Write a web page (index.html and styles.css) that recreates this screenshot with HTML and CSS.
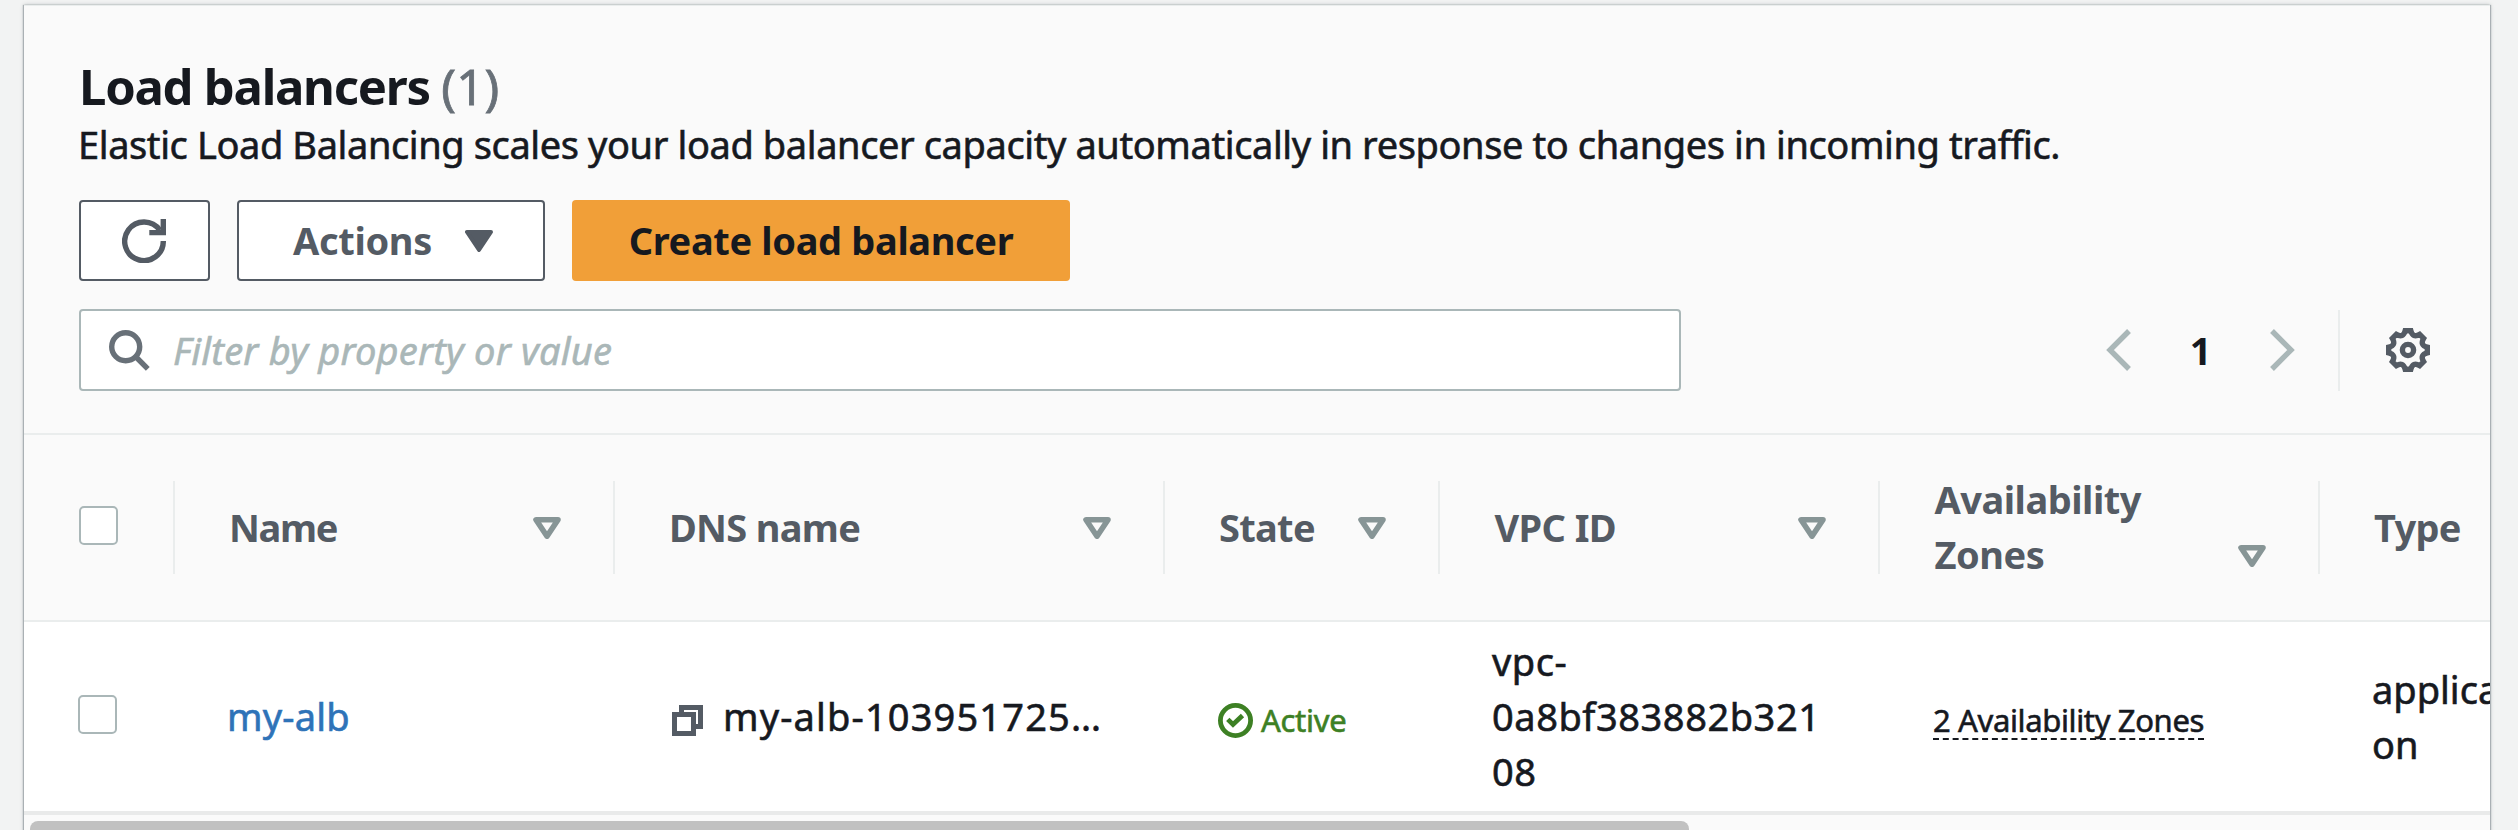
FILE: index.html
```html
<!DOCTYPE html>
<html lang="en">
<head>
<meta charset="utf-8">
<title>Load balancers</title>
<link rel="stylesheet" href="styles.css">
</head>
<body>
<svg class="defs" aria-hidden="true">
  <symbol id="sort" viewBox="0 0 28 22"><path d="M3 2.8H25L14 19.2Z" fill="none" stroke="currentColor" stroke-width="5.6" stroke-linejoin="round"/></symbol>
</svg>
<main class="panel">
  <header class="panel-header">
    <h1 class="title">Load balancers <span class="count">(1)</span></h1>
    <p class="description">Elastic Load Balancing scales your load balancer capacity automatically in response to changes in incoming traffic.</p>
    <div class="actions">
      <button class="button button-icon" aria-label="Refresh">
        <svg width="44" height="44" viewBox="0 0 44 44" fill="none" stroke="currentColor" stroke-width="5.4"><path d="M41.3 22A19.3 19.3 0 1 1 37.8 11.2"/><path d="M41.3 0V13.6H27.3"/></svg>
      </button>
      <button class="button button-menu"><span>Actions</span>
        <svg width="28" height="22" viewBox="0 0 28 22"><path d="M2 2H26L14 20Z" fill="currentColor" stroke="currentColor" stroke-width="4" stroke-linejoin="round"/></svg>
      </button>
      <button class="button button-primary">Create load balancer</button>
    </div>
    <div class="tools">
      <div class="filter">
        <svg width="41" height="41" viewBox="0 0 41 41" fill="none" stroke="currentColor" stroke-width="5.4"><circle cx="16.7" cy="16.7" r="14"/><path d="M26.5 26.5L38.8 38.8"/></svg>
        <span class="placeholder">Filter by property or value</span>
      </div>
      <nav class="pager">
        <svg width="25" height="42" viewBox="0 0 25 42" fill="none" stroke="currentColor" stroke-width="5.4"><path d="M23 2L4 21L23 40"/></svg>
        <span class="page">1</span>
        <svg width="25" height="42" viewBox="0 0 25 42" fill="none" stroke="currentColor" stroke-width="5.4"><path d="M2 2L21 21L2 40"/></svg>
      </nav>
      <div class="settings">
        <svg width="44" height="44" viewBox="-22 -22 44 44" fill="none" stroke="currentColor" stroke-width="5.4"><path d="M-2.8 -19.3L2.8 -19.3Q4.8 -11.5 11.67 -15.63L15.63 -11.67Q11.5 -4.8 19.3 -2.8L19.3 2.8Q11.5 4.8 15.63 11.67L11.67 15.63Q4.8 11.5 2.8 19.3L-2.8 19.3Q-4.8 11.5 -11.67 15.63L-15.63 11.67Q-11.5 4.8 -19.3 2.8L-19.3 -2.8Q-11.5 -4.8 -15.63 -11.67L-11.67 -15.63Q-4.8 -11.5 -2.8 -19.3Z"/><circle r="5.6"/></svg>
      </div>
    </div>
  </header>

  <section class="table">
    <div class="row head">
      <div class="cell select"><span class="checkbox"></span></div>
      <div class="cell"><span class="t-name">Name</span><svg class="sort"><use href="#sort"/></svg></div>
      <div class="cell"><span class="t-dns">DNS name</span><svg class="sort"><use href="#sort"/></svg></div>
      <div class="cell state"><span class="t-state">State</span><svg class="sort"><use href="#sort"/></svg></div>
      <div class="cell wide"><span class="t-vpc">VPC ID</span><svg class="sort"><use href="#sort"/></svg></div>
      <div class="cell wide zones"><span class="t-zones">Availability Zones</span><svg class="sort"><use href="#sort"/></svg></div>
      <div class="cell state"><span class="t-type">Type</span></div>
    </div>
    <div class="row body">
      <div class="cell select"><span class="checkbox"></span></div>
      <div class="cell"><a class="link">my-alb</a></div>
      <div class="cell dns">
        <svg width="31" height="31" viewBox="0 0 31 31" fill="none" stroke="currentColor" stroke-width="5"><path d="M9.5 7V2.5H28.5V21.5H24"/><path d="M2.5 9.5H21.5V28.5H2.5Z"/></svg>
        <span>my-alb-103951725…</span>
      </div>
      <div class="cell status">
        <svg width="35" height="35" viewBox="0 0 35 35" fill="none" stroke="currentColor" stroke-width="4.8"><circle cx="17.5" cy="17.5" r="15.1"/><path d="M9.8 16.4L15 21.5L24.5 12.6"/></svg>
        <span>Active</span>
      </div>
      <div class="cell vpc">vpc-<br>0a8bf383882b321<br>08</div>
      <div class="cell az"><span>2 Availability Zones</span></div>
      <div class="cell type">applicati<br>on</div>
    </div>
  </section>
  <div class="scroll-track"><div class="scroll-thumb"></div></div>
</main>
</body>
</html>
```
FILE: styles.css
```css
* { box-sizing: border-box; }
body {
  margin: 0;
  height: 830px;
  overflow: hidden;
  padding: 5px 28px 0 24px;
  background: #f2f3f3;
  color: #16191f;
  font: 38px/55px "Noto Sans", sans-serif;
}
svg { display: block; flex: none; }
.defs { position: absolute; width: 0; height: 0; }

.panel {
  width: 2466px;
  height: 840px;
  overflow: hidden;
  background: #fafafa;
  border-top: 1px solid #eaeded;
  box-shadow: -1px 0 1px #aab0b4, 1px 0 1px #aab0b4, 0 0 4px rgba(0, 28, 36, 0.25);
}
.panel-header {
  height: 429px;
  padding: 46px 60px 0 55px;
  border-bottom: 2px solid #eaeded;
}
.title {
  margin: 0;
  font-size: 49px;
  line-height: 68px;
  letter-spacing: -1.25px;
}
.count {
  color: #687078;
  font-weight: 400;
  letter-spacing: 0.3px;
  -webkit-text-stroke: 0.8px currentColor;
}
.description {
  margin: -3px 0 0 -1px;
  letter-spacing: -0.4px;
  white-space: nowrap;
}
.description,
.placeholder,
.body { -webkit-text-stroke: 0.6px currentColor; }

.actions { display: flex; gap: 27px; margin-top: 28px; }
.button {
  display: flex;
  align-items: center;
  justify-content: center;
  height: 81px;
  padding: 0;
  border: 2px solid #545b64;
  border-radius: 4px;
  background: #fff;
  color: #545b64;
  font: 700 38px/55px "Noto Sans", sans-serif;
  letter-spacing: -0.35px;
}
.button-icon { width: 131px; padding-right: 2px; }
.button-menu { width: 308px; gap: 33px; padding-left: 4px; }
.button-primary {
  width: 498px;
  border: 0;
  background: #f19f38;
  color: #16191f;
}

.tools { display: flex; align-items: center; margin-top: 28px; }
.filter {
  display: flex;
  align-items: center;
  gap: 23px;
  width: 1602px;
  height: 82px;
  padding-left: 28px;
  border: 2px solid #aab7b8;
  border-radius: 4px;
  background: #fff;
  color: #687078;
}
.placeholder { color: #aab7b8; font-style: italic; letter-spacing: 0.2px; }
.pager {
  display: flex;
  align-items: center;
  justify-content: space-between;
  width: 189px;
  margin-left: auto;
  color: #aab7b8;
}
.page { color: #16191f; font-weight: 700; }
.settings {
  display: flex;
  align-items: center;
  justify-content: flex-end;
  width: 92px;
  height: 81px;
  margin-left: 43px;
  border-left: 2px solid #eaeded;
  color: #545b64;
}

.row {
  display: grid;
  grid-template-columns: 151px 440px 550px 275px 440px 440px 440px;
  width: 2736px;
}
.cell { display: flex; align-items: center; padding-left: 52px; }
.cell.select { padding-left: 55px; }
.checkbox {
  width: 39px;
  height: 39px;
  border: 2px solid #aab7b8;
  border-radius: 5px;
  background: #fff;
}

.head {
  height: 187px;
  padding: 46px 0;
  border-bottom: 2px solid #eaeded;
  color: #545b64;
  font-weight: 700;
}
.head .cell {
  justify-content: space-between;
  padding-left: 54px;
  padding-right: 52px;
  border-right: 2px solid #eaeded;
}
.head .cell.wide { padding-left: 54.5px; }
.head .cell.select { padding: 0 0 5px 55px; }
.head .zones { align-items: flex-end; }
.zones .sort { margin-bottom: 7px; }
.zones span { width: 240px; margin: -10px 0 -8px; }
.sort { width: 28px; height: 22px; color: #879596; }
.t-name { letter-spacing: -1.3px; }
.t-dns { letter-spacing: -0.7px; }
.t-state { letter-spacing: -0.7px; }
.t-vpc { letter-spacing: -0.6px; }
.t-zones { letter-spacing: -0.5px; }
.t-type { letter-spacing: -0.7px; }

.body { height: 189px; background: #fff; }
.body .select { padding: 0 0 4px 54px; }
.link { color: #2e73b8; letter-spacing: 0.2px; }
.dns { gap: 20px; }
.body .dns { padding-left: 57px; letter-spacing: 1.15px; }
.dns svg { margin-top: 8px; color: #545b64; }
.body .status {
  gap: 8px;
  padding: 7px 0 0 53px;
  color: #3d8024;
  font-size: 31px;
  letter-spacing: -0.3px;
}
.body .vpc { padding-left: 52px; letter-spacing: 0.55px; }
.az { font-size: 31px; letter-spacing: -0.36px; }
.body .az { padding-left: 53px; }
.az span {
  margin-top: 8px;
  line-height: 36px;
  border-bottom: 2px dashed #16191f;
}
.vpc, .type { white-space: nowrap; }

.scroll-track {
  height: 30px;
  padding: 6px 0 0 6px;
  border-top: 4px solid #e9eaea;
}
.scroll-thumb {
  width: 1659px;
  height: 16px;
  border-radius: 8px;
  background: #c1c1c1;
}
```
